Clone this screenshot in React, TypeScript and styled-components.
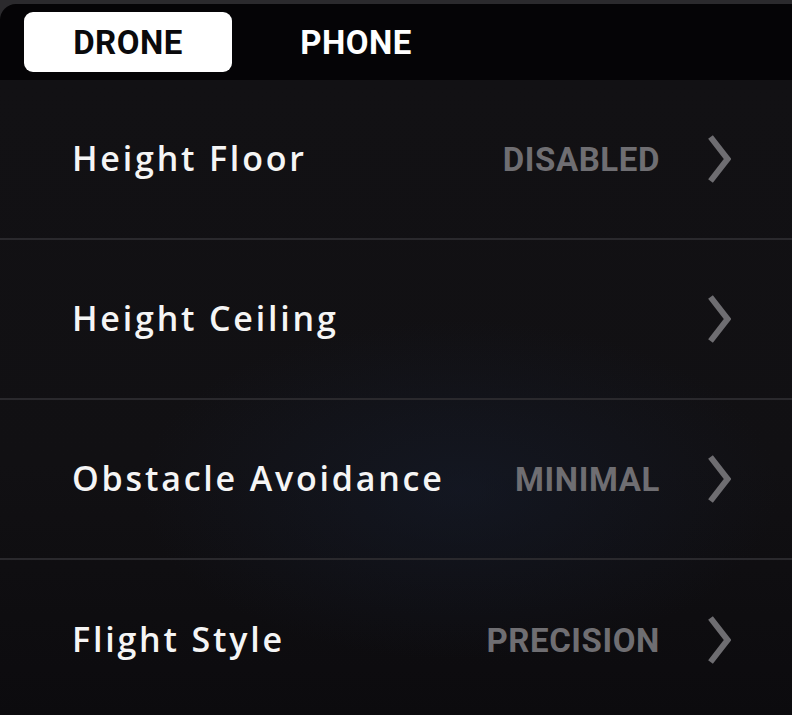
import React from "react";
import styled, { createGlobalStyle } from "styled-components";

const Global = createGlobalStyle`
  html, body { margin: 0; padding: 0; background: #111013; }
  * { box-sizing: border-box; }
`;

const Screen = styled.div`
  width: 792px;
  height: 715px;
  overflow: hidden;
  background: #2b2a2d;
  padding-top: 4px;
  display: flex;
  flex-direction: column;
`;

const TabBar = styled.div`
  height: 76px;
  flex-shrink: 0;
  background: #050406;
  border-top-left-radius: 16px;
  padding: 8px 24px;
  display: flex;
  gap: 20px;
`;

const Tab = styled.div<{ $active?: boolean }>`
  width: 208px;
  height: 60px;
  border-radius: 9px;
  background: ${(p) => (p.$active ? "#ffffff" : "transparent")};
  color: ${(p) => (p.$active ? "#0a0a0c" : "#ffffff")};
  font-family: Roboto, "Liberation Sans", sans-serif;
  font-weight: 700;
  font-size: 33px;
  letter-spacing: 0.5px;
  display: flex;
  align-items: center;
  justify-content: center;
`;

const List = styled.div`
  flex: 1;
  background:
    radial-gradient(ellipse 320px 170px at 58% 64%, rgba(22, 30, 48, 0.5), rgba(22, 30, 48, 0) 100%),
    linear-gradient(180deg, #121114 0%, #111013 60%, #0c0b0e 100%);
  display: flex;
  flex-direction: column;
`;

const Row = styled.div`
  height: 160px;
  flex-shrink: 0;
  display: flex;
  align-items: center;
  padding: 0 61px 0 72px;
  border-bottom: 2px solid #2a292d;
  &:last-child {
    border-bottom: none;
  }
`;

const Title = styled.div`
  flex: 1;
  color: #f5f5f5;
  font-family: "Open Sans", "Noto Sans", sans-serif;
  font-weight: 600;
  font-size: 34px;
  letter-spacing: 2.8px;
  padding-bottom: 2px;
`;

const Value = styled.div`
  color: #6f6e72;
  font-family: Roboto, "Liberation Sans", sans-serif;
  font-weight: 700;
  font-size: 33px;
  letter-spacing: 0.6px;
  margin-right: 47px;
`;

const Chevron = () => (
  <svg width="24" height="50" viewBox="0 0 24 50" style={{ display: "block" }}>
    <polyline points="3.5,3 20.5,25 3.5,47" fill="none" stroke="#6e6d71" strokeWidth="6" strokeLinejoin="miter" />
  </svg>
);

const rows = [
  { title: "Height Floor", value: "DISABLED" },
  { title: "Height Ceiling", value: "" },
  { title: "Obstacle Avoidance", value: "MINIMAL" },
  { title: "Flight Style", value: "PRECISION" },
];

export default function App() {
  return (
    <>
      <Global />
      <Screen>
        <TabBar>
          <Tab $active>DRONE</Tab>
          <Tab>PHONE</Tab>
        </TabBar>
        <List>
          {rows.map((r) => (
            <Row key={r.title}>
              <Title>{r.title}</Title>
              {r.value && <Value>{r.value}</Value>}
              <Chevron />
            </Row>
          ))}
        </List>
      </Screen>
    </>
  );
}
